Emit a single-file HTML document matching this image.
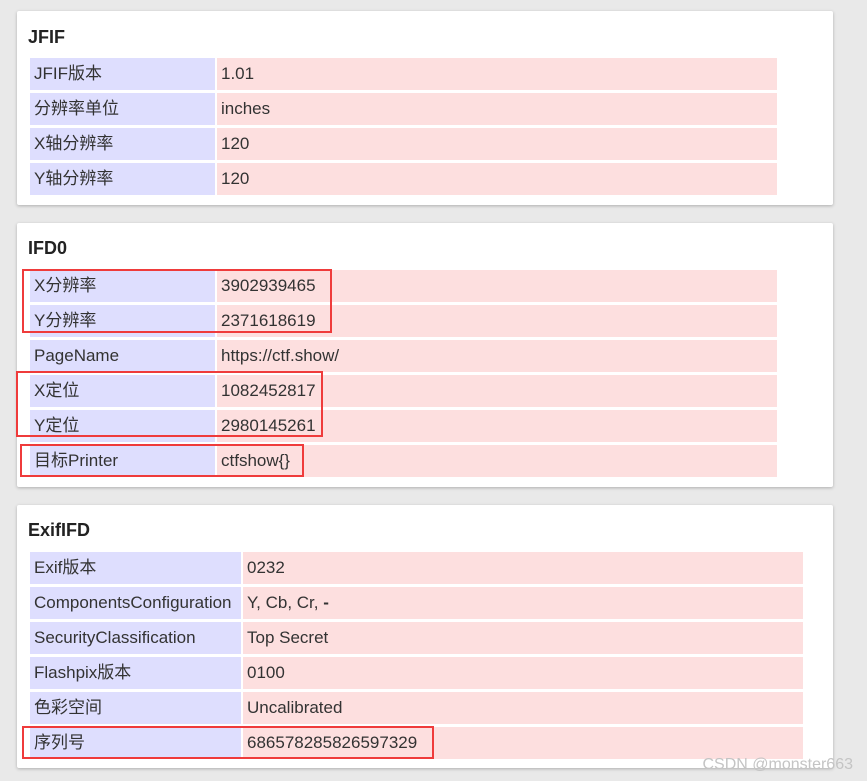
<!DOCTYPE html>
<html><head><meta charset="utf-8"><style>
body{margin:0;background:#e9e9e9;width:867px;height:781px;overflow:hidden;position:relative;font-family:"Liberation Sans","Noto Sans CJK SC",sans-serif;color:#333;}
.card{position:absolute;left:17px;width:816px;background:#fff;box-shadow:0 1px 3px rgba(0,0,0,.25);border-radius:2px;}
h3{position:absolute;left:11px;margin:0;font-size:18px;font-weight:bold;color:#222;}
table{position:absolute;left:13px;border-collapse:separate;border-spacing:2px 3px;margin:-3px -2px;}
td{height:32px;padding:0 0 0 4px;font-size:17px;line-height:32px;white-space:nowrap;}
td.k{background:#dedefe;}
td.v{background:#fddfdf;}
.r{position:absolute;border:2px solid #ef3b3b;box-sizing:border-box;}
.wm{position:absolute;right:14px;top:756px;font-size:16px;color:#c4c4c4;}
</style></head><body>
<div class="card" style="top:11px;height:194px">
<h3 style="top:16px">JFIF</h3>
<table style="top:47px"><tr><td class="k" style="width:181px">JFIF版本</td><td class="v" style="width:556px">1.01</td></tr>
<tr><td class="k">分辨率单位</td><td class="v">inches</td></tr>
<tr><td class="k">X轴分辨率</td><td class="v">120</td></tr>
<tr><td class="k">Y轴分辨率</td><td class="v">120</td></tr></table>
</div>
<div class="card" style="top:223px;height:264px">
<h3 style="top:15px">IFD0</h3>
<table style="top:47px"><tr><td class="k" style="width:181px">X分辨率</td><td class="v" style="width:556px">3902939465</td></tr>
<tr><td class="k">Y分辨率</td><td class="v">2371618619</td></tr>
<tr><td class="k">PageName</td><td class="v">https://ctf.show/</td></tr>
<tr><td class="k">X定位</td><td class="v">1082452817</td></tr>
<tr><td class="k">Y定位</td><td class="v">2980145261</td></tr>
<tr><td class="k">目标Printer</td><td class="v">ctfshow{}</td></tr></table>
</div>
<div class="card" style="top:505px;height:263px">
<h3 style="top:15px">ExifIFD</h3>
<table style="top:47px"><tr><td class="k" style="width:207px">Exif版本</td><td class="v" style="width:556px">0232</td></tr>
<tr><td class="k">ComponentsConfiguration</td><td class="v">Y, Cb, Cr, <b>-</b></td></tr>
<tr><td class="k">SecurityClassification</td><td class="v">Top Secret</td></tr>
<tr><td class="k">Flashpix版本</td><td class="v">0100</td></tr>
<tr><td class="k">色彩空间</td><td class="v">Uncalibrated</td></tr>
<tr><td class="k">序列号</td><td class="v">686578285826597329</td></tr></table>
</div>
<div class="r" style="left:22px;top:269px;width:310px;height:64px"></div>
<div class="r" style="left:16px;top:371px;width:307px;height:66px"></div>
<div class="r" style="left:20px;top:444px;width:284px;height:33px"></div>
<div class="r" style="left:22px;top:726px;width:412px;height:33px"></div>
<div class="wm">CSDN @monster663</div>
</body></html>
